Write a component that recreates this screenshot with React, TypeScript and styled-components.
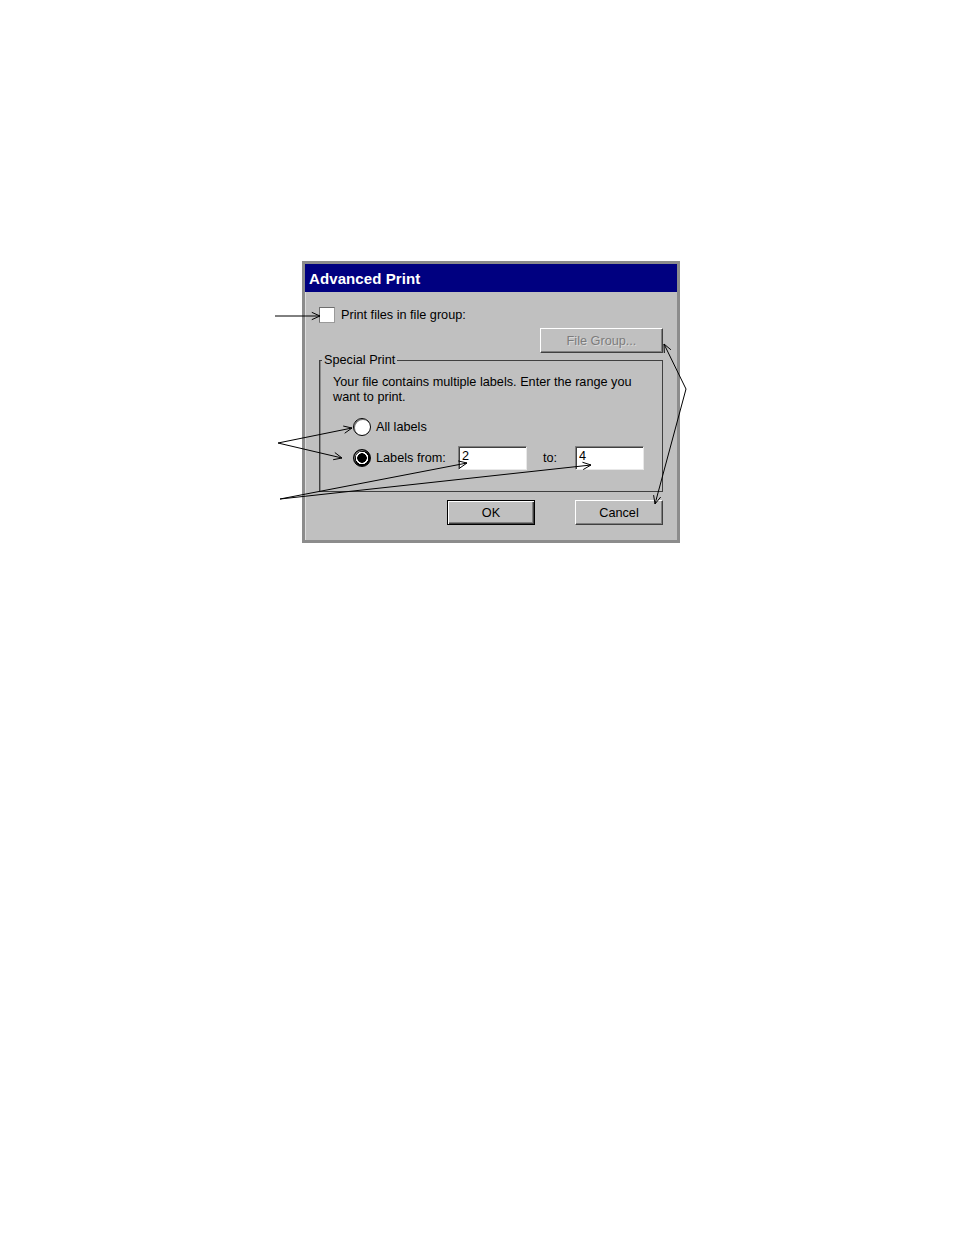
import { FC } from "react";
import styled, { createGlobalStyle } from "styled-components";

const GlobalStyle = createGlobalStyle`
  html, body {
    margin: 0;
    padding: 0;
    background: #ffffff;
  }
`;

const Page = styled.div`
  position: relative;
  box-sizing: border-box;
  width: 954px;
  height: 1235px;
  padding: 261px 0 0 302px;
  font-family: "Liberation Sans", Arial, sans-serif;
  font-size: 12.7px;
  color: #000;
`;

const Dialog = styled.div`
  box-sizing: border-box;
  width: 378px;
  height: 282px;
  display: flex;
  flex-direction: column;
  background: #c0c0c0;
  border: 3px solid #8c8c8c;
  box-shadow: inset 1px 0 0 #dcdcdc, inset 0 1px 0 #dcdcdc;
`;

const TitleBar = styled.div`
  height: 28px;
  display: flex;
  align-items: center;
  padding-left: 4px;
  background: #000080;
  color: #fff;
  font-weight: bold;
  font-size: 15px;
  letter-spacing: 0.1px;
`;

const Body = styled.div`
  flex: 1;
  display: flex;
  flex-direction: column;
  padding: 15px 14px 0 14px;
`;

const CheckRow = styled.label`
  display: flex;
  align-items: center;
  gap: 6px;
  height: 16px;
`;

const CheckBox = styled.span`
  box-sizing: border-box;
  width: 16px;
  height: 16px;
  background: #fff;
  border: 1px solid #6e6e6e;
  border-right-color: #9a9a9a;
  border-bottom-color: #9a9a9a;
`;

const RightRow = styled.div`
  display: flex;
  justify-content: flex-end;
  margin-top: 5px;
`;

const Button = styled.button<{ $w: number; $default?: boolean }>`
  box-sizing: border-box;
  width: ${(p) => p.$w}px;
  height: 25px;
  padding: 0;
  font-family: inherit;
  font-size: 12.7px;
  color: #000;
  background: #c0c0c0;
  border: 1px solid;
  border-color: ${(p) =>
    p.$default ? "#000" : "#ffffff #404040 #404040 #ffffff"};
  box-shadow: ${(p) =>
    p.$default
      ? "inset 1px 1px #ffffff, inset -1px -1px #404040, inset -2px -2px #808080"
      : "inset -1px -1px #808080"};

  &:disabled {
    color: #7c7c7c;
    text-shadow: 1px 1px 0 #dadada;
  }
`;

const Group = styled.fieldset`
  box-sizing: border-box;
  margin: 0;
  height: 139px;
  padding: 8px 13px 0 13px;
  border: 1px solid #404040;
  box-shadow: inset 1px 0 0 #8a8a8a;
`;

const Legend = styled.legend`
  margin-left: -11px;
  padding: 0 2px;
  line-height: 14px;
`;

const Info = styled.p`
  margin: 0;
  line-height: 15px;
`;

const OptionRow = styled.div<{ $top: number }>`
  display: flex;
  align-items: center;
  margin-top: ${(p) => p.$top}px;
  padding-left: 20px;
`;

const Radio = styled.span<{ $on?: boolean }>`
  box-sizing: border-box;
  width: 18px;
  height: 18px;
  border-radius: 50%;
  background: ${(p) =>
    p.$on
      ? "radial-gradient(circle, #000 0 4.5px, #fff 5px 6px, #000 6.5px)"
      : "#fff"};
  border: 1.5px solid #000;
  box-shadow: inset 1px 1px 0 #7a7a7a;
  margin-right: 5px;
  flex: none;
`;

const OptionLabel = styled.span<{ $w?: number; $indent?: number }>`
  box-sizing: border-box;
  width: ${(p) => (p.$w ? `${p.$w}px` : "auto")};
  padding-left: ${(p) => p.$indent ?? 0}px;
`;

const Field = styled.input`
  box-sizing: border-box;
  width: 69px;
  height: 24px;
  padding: 0 0 4px 3px;
  font-family: inherit;
  font-size: 12.7px;
  background: #fff;
  border: 1px solid;
  border-color: #808080 #e8e8e8 #e8e8e8 #808080;
  box-shadow: inset 1px 1px #404040;
  outline: none;
`;

const Footer = styled.div`
  display: flex;
  justify-content: flex-end;
  gap: 40px;
  margin-top: 8px;
`;

const Overlay = styled.svg`
  position: absolute;
  left: 0;
  top: 0;
  pointer-events: none;
`;

type Pt = [number, number];

const arrow = (from: Pt, to: Pt, size = 9, spread = 0.42) => {
  const [x1, y1] = from;
  const [x2, y2] = to;
  const a = Math.atan2(y2 - y1, x2 - x1);
  const l: Pt = [x2 - size * Math.cos(a - spread), y2 - size * Math.sin(a - spread)];
  const r: Pt = [x2 - size * Math.cos(a + spread), y2 - size * Math.sin(a + spread)];
  return `M${x1} ${y1}L${x2} ${y2}M${l[0]} ${l[1]}L${x2} ${y2}L${r[0]} ${r[1]}`;
};

const callouts: [Pt, Pt][] = [
  [[275, 316], [320, 316]],
  [[278, 443], [352, 428]],
  [[278, 443], [342, 458]],
  [[280, 499], [467, 463]],
  [[280, 499], [591, 465]],
  [[686, 389], [664, 344]],
  [[686, 389], [655, 504]],
];

const Callouts: FC = () => (
  <Overlay width={954} height={1235} viewBox="0 0 954 1235">
    {callouts.map(([a, b], i) => (
      <path key={i} d={arrow(a, b)} fill="none" stroke="#000" strokeWidth={1} />
    ))}
  </Overlay>
);

export default function App() {
  return (
    <Page>
      <GlobalStyle />
      <Dialog>
        <TitleBar>Advanced Print</TitleBar>
        <Body>
          <CheckRow>
            <CheckBox />
            Print files in file group:
          </CheckRow>
          <RightRow>
            <Button type="button" $w={123} disabled>
              File Group...
            </Button>
          </RightRow>
          <Group>
            <Legend>Special Print</Legend>
            <Info>
              Your file contains multiple labels. Enter the range you
              <br />
              want to print.
            </Info>
            <OptionRow $top={13}>
              <Radio />
              <OptionLabel>All labels</OptionLabel>
            </OptionRow>
            <OptionRow $top={10}>
              <Radio $on />
              <OptionLabel $w={82}>Labels from:</OptionLabel>
              <Field defaultValue="2" />
              <OptionLabel $w={48} $indent={16}>
                to:
              </OptionLabel>
              <Field defaultValue="4" />
            </OptionRow>
          </Group>
          <Footer>
            <Button type="button" $w={88} $default>
              OK
            </Button>
            <Button type="button" $w={88}>
              Cancel
            </Button>
          </Footer>
        </Body>
      </Dialog>
      <Callouts />
    </Page>
  );
}
